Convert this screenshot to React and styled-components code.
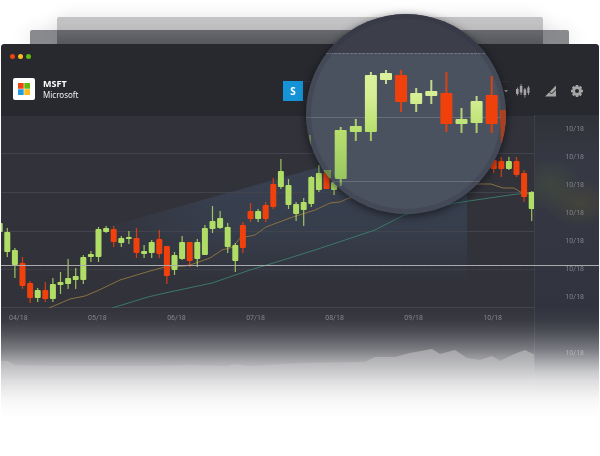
import styled, { createGlobalStyle } from "styled-components";

const GlobalStyle = createGlobalStyle`
  * {
    box-sizing: border-box;
  }
  body {
    margin: 0;
    background: #fff;
    font-family: "Noto Sans", "Open Sans", sans-serif;
    overflow-x: hidden;
  }
`;

const Page = styled.main`
  position: relative;
  padding-top: 17px;
`;
const FarCard = styled.div`
  height: 27px;
  margin: 0 57px -14px;
  border-radius: 2px 2px 0 0;
  background: linear-gradient(#c6c6c8 0 13px, #b4b4b7 13px, #8e8e92);
  box-shadow: 0 0 18px rgba(0, 0, 0, 0.1);
`;
const NearCard = styled.div`
  height: 14px;
  margin: 0 31px 0 30px;
  border-radius: 2px 2px 0 0;
  background: rgba(45, 46, 52, 0.56);
  box-shadow: 0 4px 22px rgba(0, 0, 0, 0.16);
`;
const Window = styled.section`
  position: relative;
  margin: 0 1px;
  overflow: hidden;
  border-radius: 3px 3px 0 0;
  background: #31323a;
  mask-image: linear-gradient(
    #000 262px,
    rgba(0, 0, 0, 0.96) 276px,
    rgba(0, 0, 0, 0.88) 286px,
    rgba(0, 0, 0, 0.76) 296px,
    rgba(0, 0, 0, 0.63) 306px,
    rgba(0, 0, 0, 0.45) 316px,
    rgba(0, 0, 0, 0.26) 328px,
    rgba(0, 0, 0, 0.16) 337px,
    rgba(0, 0, 0, 0.09) 347px,
    rgba(0, 0, 0, 0.03) 358px,
    transparent 374px
  );
`;
const Header = styled.header`
  height: 72px;
  padding: 10px 16px 0 12px;
  background: #28292f;
`;
const Lights = styled.div`
  display: flex;
  gap: 3px;
  margin-left: -3px;
`;
const Light = styled.span`
  width: 5px;
  height: 5px;
  border-radius: 50%;
  background: ${(props) => props.$color};
`;
const Toolbar = styled.div`
  display: grid;
  grid-template-columns: 9fr 10fr;
  align-items: center;
  margin-top: 18px;
`;
const Company = styled.div`
  display: flex;
  align-items: center;
  gap: 8px;
`;
const Logo = styled.svg`
  width: 22px;
  height: 22px;
  border-radius: 2px;
  background: #fff;
`;
const Ticker = styled.h1`
  margin: 0;
  font-size: 9px;
  line-height: 11px;
  font-weight: 700;
  color: #fff;
`;
const CompanyName = styled.p`
  margin: 0;
  font-size: 8px;
  line-height: 11px;
  color: #eee;
`;
const Tools = styled.div`
  display: flex;
  align-items: center;
  margin-top: 4px;
`;
const SymbolButton = styled.button`
  width: 20px;
  height: 20px;
  padding: 0;
  border: none;
  background: #1593d6;
  color: #fff;
  font-family: inherit;
  font-size: 10px;
  font-weight: 700;
  cursor: pointer;
`;
const RangeButton = styled.button`
  flex: 1;
  height: 20px;
  padding: 0;
  border: 1px solid #32333a;
  border-width: 1px 0;
  background: none;
  text-align: right;
  line-height: 0;
  cursor: pointer;
`;
const Actions = styled.div`
  display: flex;
  gap: 13px;
  margin-left: 8px;
  margin-right: -1px;
`;
const IconButton = styled.button`
  width: 14px;
  height: 16px;
  padding: 0;
  border: none;
  background: none;
  color: #a6a6a6;
  line-height: 0;
  cursor: pointer;
`;
const Body = styled.div`
  position: relative;
  display: flex;
`;
const Main = styled.div`
  flex: 1;
  min-width: 0;
`;
const Chart = styled.svg`
  display: block;
  width: 100%;
  height: auto;
`;
const TimeAxis = styled.div`
  display: flex;
  justify-content: space-between;
  padding: 3px 32px 1px 8px;
`;
const AxisLabel = styled.span`
  font-family: Roboto, sans-serif;
  font-size: 7px;
  line-height: 14px;
  color: #80828a;
`;
const PriceAxis = styled.div`
  display: grid;
  grid-auto-rows: 28px;
  align-items: center;
  align-content: start;
  justify-items: end;
  flex: 0 0 65px;
  margin-top: -1px;
  padding-right: 15px;
  border-left: 1px solid #3d4048;
  background: radial-gradient(
      30px 26px at 16px 70px,
      rgba(72, 84, 60, 0.5),
      transparent
    ),
    radial-gradient(36px 24px at 46px 88px, rgba(84, 80, 52, 0.5), transparent),
    linear-gradient(#303239, #363944 50px, #31343e 190px, #2c2d35);
`;
const Crosshair = styled.div`
  position: absolute;
  top: 149px;
  left: 0;
  right: 0;
  height: 1px;
  background: #a9aaae;
`;
const Lens = styled.div`
  position: absolute;
  top: 14px;
  left: 51%;
  width: 200px;
  height: 200px;
  overflow: hidden;
  border-radius: 50%;
  box-shadow: 0 2px 9px rgba(0, 0, 0, 0.55);
`;

const UP = "#b0dd66";
const DOWN = "#f0410c";

// [high, top, bottom, low, falling]
const CANDLES = [
  [222, 223, 232, 233],
  [228, 232, 252, 257],
  [248, 250, 265, 278],
  [257, 263, 286, 289, 1],
  [281, 283, 298, 303, 1],
  [288, 290, 298, 302],
  [282, 290, 299, 302, 1],
  [278, 284, 299, 302],
  [272, 282, 285, 294],
  [259, 278, 284, 289],
  [268, 276, 280, 289],
  [255, 257, 280, 284],
  [251, 254, 257, 262],
  [227, 229, 257, 262],
  [226, 228, 232, 233],
  [226, 229, 242, 247, 1],
  [236, 238, 243, 247],
  [231, 237, 239, 244],
  [228, 238, 253, 258, 1],
  [245, 251, 254, 258],
  [240, 242, 253, 258],
  [230, 239, 254, 258, 1],
  [246, 246, 276, 284, 1],
  [252, 255, 270, 275],
  [236, 242, 259, 260],
  [242, 242, 261, 267, 1],
  [239, 242, 259, 267],
  [225, 228, 255, 255],
  [206, 221, 229, 233],
  [211, 218, 228, 229],
  [223, 227, 247, 253],
  [243, 245, 261, 272],
  [222, 225, 248, 253, 1],
  [203, 211, 219, 222, 1],
  [209, 211, 219, 222],
  [202, 205, 219, 222, 1],
  [178, 184, 207, 209, 1],
  [159, 171, 187, 189],
  [179, 185, 205, 209],
  [202, 204, 214, 221],
  [198, 202, 210, 226],
  [176, 177, 204, 207],
  [165, 173, 190, 192],
  [170, 172, 189, 189, 1],
  [180, 182, 190, 195],
];
const LATEST = [
  [157, 160, 169, 173, 1],
  [157, 161, 169, 177, 1],
  [157, 161, 169, 170],
  [157, 161, 175, 177, 1],
  [170, 173, 197, 202, 1],
  [191, 192, 209, 221],
];
const ZOOMED = [
  [127, 130, 179, 186],
  [119, 126, 132, 141],
  [72, 75, 132, 141],
  [70, 73, 80, 84],
  [70, 75, 102, 112, 1],
  [88, 93, 104, 112],
  [80, 91, 96, 104],
  [72, 93, 124, 132, 1],
  [108, 119, 124, 133],
  [96, 101, 123, 133],
  [76, 95, 124, 133, 1],
];

const DATES = ["04/18", "05/18", "06/18", "07/18", "08/18", "09/18", "10/18"];
const PRICES = ["10/18", "10/18", "10/18", "10/18", "10/18", "10/18", "10/18", "", "10/18"];

const Candles = ({ data, start, step, width, wick, up = UP }) =>
  data.map(([high, top, bottom, low, falling], i) => {
    const x = start + i * step;
    return (
      <g key={i} fill={falling ? DOWN : up}>
        <rect
          x={x - wick / 2}
          y={high}
          width={wick}
          height={low - high}
          opacity="0.85"
        />
        <rect
          x={x - width / 2}
          y={top}
          width={width}
          height={bottom - top}
          rx="1"
        />
      </g>
    );
  });

const PriceChart = () => (
  <Chart viewBox="1 116 533 192" aria-label="MSFT price chart" role="img">
    <defs>
      <linearGradient id="cone" x1="0" y1="0" x2="0" y2="1">
        <stop offset="0" stopColor="#3a4252" />
        <stop offset="0.6" stopColor="#363d4b" />
        <stop offset="1" stopColor="#31323a" />
      </linearGradient>
      <linearGradient id="coneFade">
        <stop offset="0" stopColor="#31323a" />
        <stop offset="1" stopColor="#31323a" stopOpacity="0" />
      </linearGradient>
    </defs>
    <path d="M78 235L320 167L380 150H467V286H78Z" fill="url(#cone)" />
    <rect x="76" y="200" width="140" height="90" fill="url(#coneFade)" />
    <g stroke="#41444d" strokeWidth="1">
      <path d="M1 153.5H534M1 192.5H534M1 231.5H534M1 307.5H534" />
      <path d="M1 269.5H534" strokeDasharray="2 1" />
    </g>
    <path
      d="M112 308L148 297L165 293L212 283L250 270L280 261L315 250L375 230L404 215L455 203L510 195L534 192"
      fill="none"
      stroke="#3c7868"
    />
    <path
      d="M49 308L70 299L85 296L97 291L120 280L150 271L165 267L185 266L193 264L210 258L222 250L233 247L240 238L255 235L266 227L290 218L315 210L330 203L340 202L349 198L478 184L491 184L503 188L514 188L522 193L531 194"
      fill="none"
      stroke="#8a7040"
    />
    <Candles data={CANDLES} start={-0.3} step={7.6} width={6} wick={1.2} />
    <path d="M325.500 154V172" stroke={UP} />
    <Candles data={LATEST} start={493.7} step={7.6} width={6} wick={1.2} />
  </Chart>
);

const VolumeChart = () => (
  <Chart viewBox="1 326 533 96" aria-label="Volume" role="img">
    <defs>
      <linearGradient
        id="volume"
        gradientUnits="userSpaceOnUse"
        x1="0"
        y1="349"
        x2="0"
        y2="376"
      >
        <stop offset="0" stopColor="#fff" stopOpacity="0.34" />
        <stop offset="0.45" stopColor="#fff" stopOpacity="0.18" />
        <stop offset="1" stopColor="#fff" stopOpacity="0" />
      </linearGradient>
    </defs>
    <path
      d="M0 361L8 361L15 365L60 366L150 366L190 365L228 366L234 364L250 366L282 364L300 363L365 362L375 357L395 357L410 353L432 349L440 354L455 350L467 358L480 360L492 356L500 361L512 355L525 350L535 355V384H0Z"
      fill="url(#volume)"
    />
  </Chart>
);

const Magnifier = () => (
  <Lens>
    <svg width="200" height="200" viewBox="306 14 200 200" aria-hidden="true">
      <defs>
        <linearGradient
          id="lensUp"
          gradientUnits="userSpaceOnUse"
          x1="0"
          y1="70"
          x2="0"
          y2="180"
        >
          <stop offset="0" stopColor="#dcf39c" />
          <stop offset="0.25" stopColor="#d5ee93" />
          <stop offset="0.55" stopColor="#b8e06e" />
          <stop offset="1" stopColor="#98c660" />
        </linearGradient>
      </defs>
      <rect x="306" y="14" width="200" height="200" fill="#4a515f" />
      <rect x="306" y="14" width="200" height="39" fill="#3c3f4a" />
      <path d="M306 53.500H506" stroke="#717681" strokeDasharray="3 1" />
      <path d="M306 117.500H506M306 181.500H506" stroke="#686e79" />
      <path d="M310 135V145" stroke="#86b050" strokeWidth="1.500" />
      <path d="M322 170H331V178H327Z" fill="#7ea650" />
      <path d="M331 182L338 187L334 190Z" fill="#7ea650" />
      <Candles
        data={ZOOMED}
        start={340.7}
        step={15.1}
        width={12}
        wick={2}
        up="url(#lensUp)"
      />
      <path d="M500 110H506V143H501Z" fill="#cf4518" />
      <circle
        cx="406"
        cy="114"
        r="97.500"
        fill="none"
        stroke="#2e3440"
        strokeOpacity="0.24"
        strokeWidth="5"
      />
    </svg>
  </Lens>
);

const App = () => {
  return (
    <>
      <GlobalStyle />
      <Page>
        <FarCard />
        <NearCard />
        <Window>
          <Header>
            <Lights>
              <Light $color="#ee4412" />
              <Light $color="#fdbb1c" />
              <Light $color="#62b80e" />
            </Lights>
            <Toolbar>
              <Company>
                <Logo viewBox="0 0 22 22" aria-hidden="true">
                  <path d="M5 5h5.700v5.700H5z" fill="#ee4412" />
                  <path d="M11.300 5H17v5.700h-5.700z" fill="#62b80e" />
                  <path d="M5 11.300h5.700V17H5z" fill="#229be0" />
                  <path d="M11.300 11.300H17V17h-5.700z" fill="#fdbb1c" />
                </Logo>
                <div>
                  <Ticker>MSFT</Ticker>
                  <CompanyName>Microsoft</CompanyName>
                </div>
              </Company>
              <Tools>
                <SymbolButton type="button">S</SymbolButton>
                <RangeButton type="button" aria-label="Choose range">
                  <svg width="4" height="3" viewBox="0 0 4 3">
                    <path d="M0 0h4L2 2.500z" fill="#8b8b8d" />
                  </svg>
                </RangeButton>
                <Actions>
                  <IconButton type="button" aria-label="Chart type">
                    <svg width="14" height="16" viewBox="0 0 14 16" fill="currentColor">
                      <path d="M0 6h2.600v5H0zM1 4.500h.8v8H1zM3.800 3h2.600v6.500H3.800zM4.700 1h.8v11h-.8zM7.600 6.500h2.600V12H7.600zM8.500 5h.8v9.500h-.8zM11.300 4.500H13.500v5.500h-2.200zM12 3h.8v9H12z" />
                    </svg>
                  </IconButton>
                  <IconButton type="button" aria-label="Indicators">
                    <svg width="14" height="16" viewBox="0 0 14 16" fill="currentColor">
                      <path d="M2 13.500L13 2.500V13.500z" />
                      <path
                        d="M1 11L5 7.500L8.500 11L13.500 6"
                        fill="none"
                        stroke="#28292f"
                      />
                    </svg>
                  </IconButton>
                  <IconButton type="button" aria-label="Settings">
                    <svg width="14" height="16" viewBox="-7 -8 14 16" fill="none" stroke="currentColor">
                      <circle r="3.400" strokeWidth="2.800" />
                      <path
                        d="M0-6V-4M0 6V4M-6 0H-4M6 0H4M-4.240-4.240L-3-3M4.240 4.240L3 3M4.240-4.240L3-3M-4.240 4.240L-3 3"
                        strokeWidth="2.600"
                      />
                    </svg>
                  </IconButton>
                </Actions>
              </Tools>
            </Toolbar>
          </Header>
          <Body>
            <Main>
              <PriceChart />
              <TimeAxis>
                {DATES.map((date) => (
                  <AxisLabel key={date}>{date}</AxisLabel>
                ))}
              </TimeAxis>
              <VolumeChart />
            </Main>
            <PriceAxis>
              {PRICES.map((price, i) => (
                <AxisLabel key={i}>{price}</AxisLabel>
              ))}
            </PriceAxis>
            <Crosshair />
          </Body>
        </Window>
        <Magnifier />
      </Page>
    </>
  );
};

export default App;
